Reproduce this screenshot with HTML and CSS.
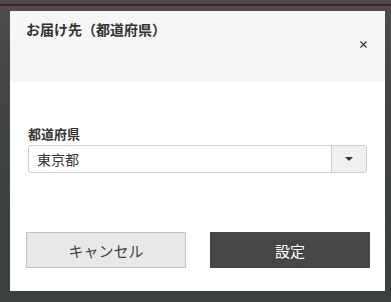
FILE: index.html
```html
<!DOCTYPE html>
<html lang="ja">
<head>
<meta charset="utf-8">
<link rel="stylesheet" href="styles.css">
</head>
<body>
<div class="topbar"></div>
<div class="redline"></div>
<div class="backdrop">
  <div class="modal">
    <div class="modal-header">
      <h2 class="title">お届け先（都道府県）</h2>
      <button class="close" aria-label="閉じる">
        <svg width="7" height="7" viewBox="0 0 7 7"><path d="M0.5 0.5 L6.5 6.5 M6.5 0.5 L0.5 6.5" stroke="#333" stroke-width="1.2" fill="none"/></svg>
      </button>
    </div>
    <div class="modal-body">
      <label class="label">都道府県</label>
      <div class="select">
        <span class="select-value">東京都</span>
        <span class="select-btn"><span class="caret"></span></span>
      </div>
    </div>
    <div class="modal-footer">
      <button class="btn btn-cancel">キャンセル</button>
      <button class="btn btn-ok">設定</button>
    </div>
  </div>
</div>
</body>
</html>
```
FILE: styles.css
```css
html, body {
  margin: 0;
  padding: 0;
}
body {
  width: 391px;
  height: 302px;
  overflow: hidden;
  background: #3e4040;
  font-family: "Noto Sans CJK JP", "Noto Sans", sans-serif;
  color: #333;
}
.topbar {
  height: 4px;
  background: #4b4b4b;
}
.redline {
  height: 2px;
  background: #4b1e23;
}
.backdrop {
  height: 296px;
  background: linear-gradient(to bottom, #4d4d4d 0, #444646 60px, #3e4141 200px, #3d4040 100%);
  padding-top: 5px;
  box-sizing: border-box;
}
.modal {
  margin-left: 10px;
  width: 375px;
  height: 280px;
  background: #fff;
  display: flex;
  flex-direction: column;
}
.modal-header {
  height: 71px;
  background: #f6f6f6;
  display: flex;
  justify-content: space-between;
  align-items: flex-start;
  padding: 0 18px 0 16px;
  box-sizing: border-box;
}
.title {
  margin: 8px 0 0 0;
  font-size: 14px;
  font-weight: 700;
  line-height: 20px;
  color: #333;
}
.close {
  margin-top: 30px;
  padding: 0;
  border: 0;
  background: none;
  width: 7px;
  height: 7px;
  display: block;
}
.close svg { display: block; }
.modal-body {
  padding: 43px 18px 0 18px;
  height: 150px;
  box-sizing: border-box;
}
.label {
  display: block;
  font-size: 13px;
  font-weight: 700;
  line-height: 18px;
  color: #333;
  margin-bottom: 2px;
}
.select {
  display: flex;
  height: 28px;
  border: 1px solid #cccccc;
  border-radius: 3px;
  box-sizing: border-box;
  overflow: hidden;
}
.select-value {
  flex: 1;
  padding-left: 8px;
  font-size: 14px;
  line-height: 26px;
  color: #333;
}
.select-btn {
  width: 34px;
  background: #f0f0f0;
  border-left: 1px solid #cccccc;
  display: flex;
  align-items: center;
  justify-content: center;
}
.caret {
  width: 0;
  height: 0;
  border-left: 4px solid transparent;
  border-right: 4px solid transparent;
  border-top: 4px solid #333;
}
.modal-footer {
  display: flex;
  gap: 24px;
  padding: 0 15px 0 16px;
}
.btn {
  width: 160px;
  height: 36px;
  font-family: "Noto Sans CJK JP", "Noto Sans", sans-serif;
  font-size: 15px;
  border-radius: 0;
  padding: 0;
  box-sizing: border-box;
}
.btn-cancel {
  background: #e8e8e8;
  border: 1px solid #c2c2c2;
  color: #444;
}
.btn-ok {
  background: #464646;
  border: 0;
  color: #fff;
}
```
